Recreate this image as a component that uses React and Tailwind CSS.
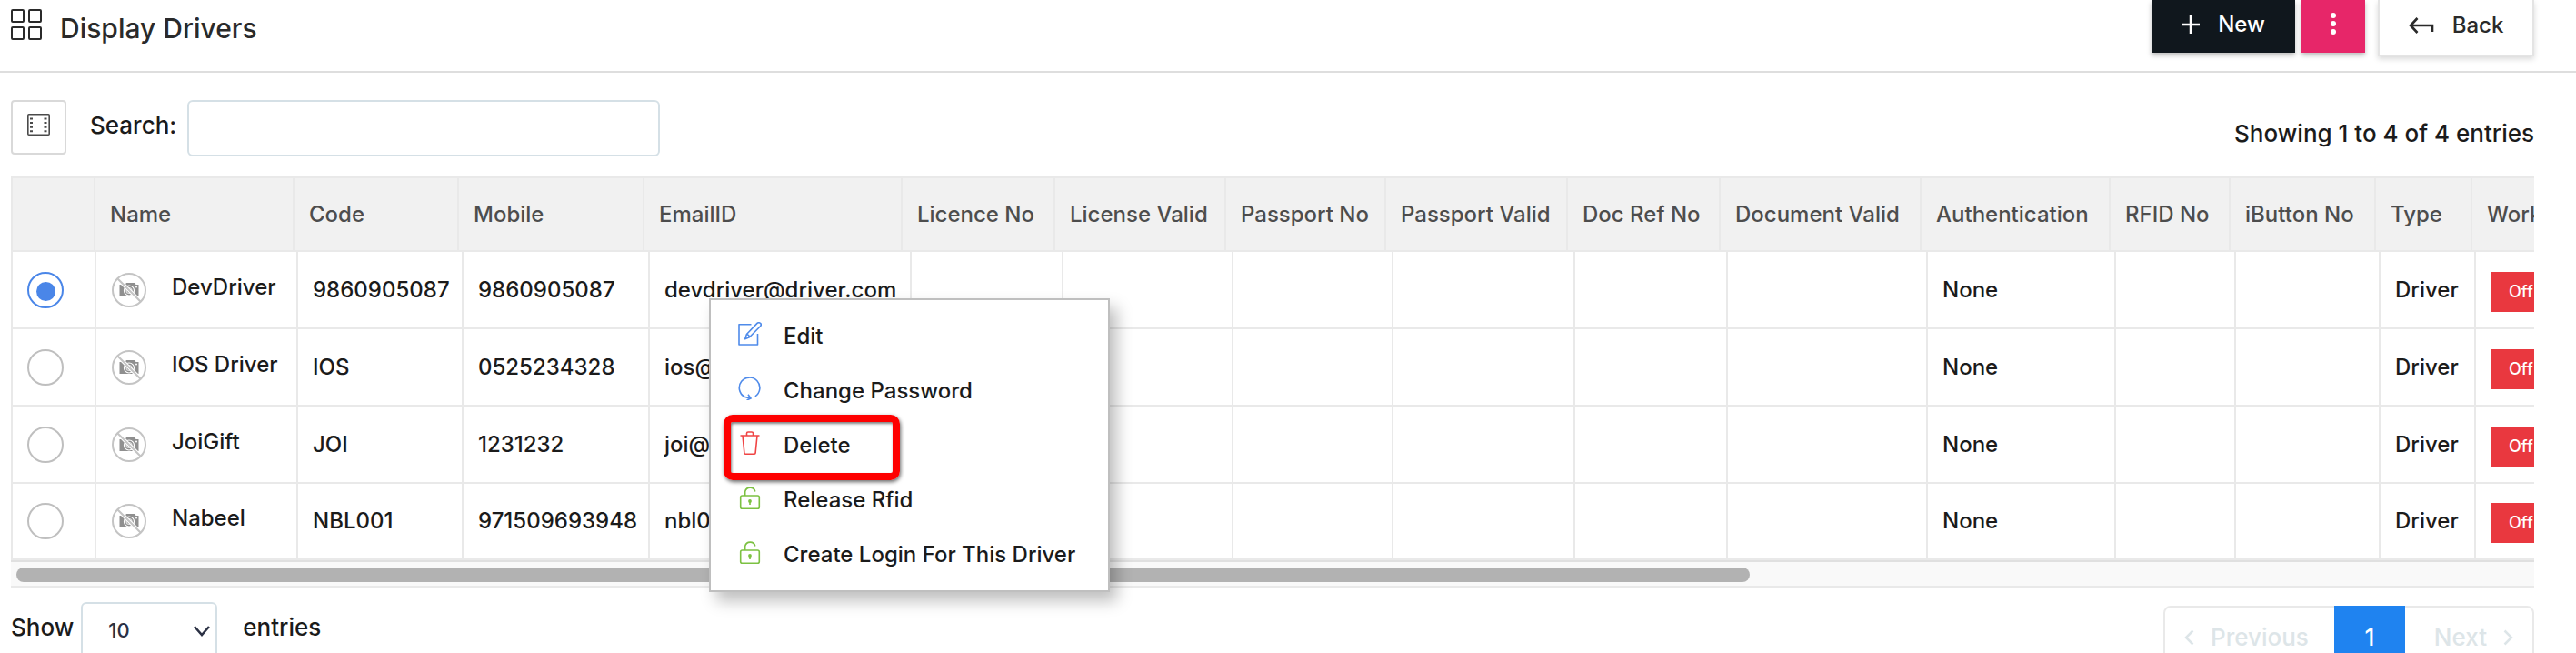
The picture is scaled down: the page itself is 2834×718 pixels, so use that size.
import { useState } from "react";

const columns = [
  { label: "", head: "w-[93px]", body: "w-[94px]" },
  { label: "Name", head: "w-[219px]", body: "w-[222px]" },
  { label: "Code", head: "w-[181px]", body: "w-[182px]" },
  { label: "Mobile", head: "w-[204px]", body: "w-[205px]" },
  { label: "EmailID", head: "w-[284px]", body: "w-[288px]" },
  { label: "Licence No", head: "w-[168px]", body: "w-[167px]" },
  { label: "License Valid", head: "w-[188px]", body: "w-[187px]" },
  { label: "Passport No", head: "w-[176px]", body: "w-[176px]" },
  { label: "Passport Valid", head: "w-[200px]", body: "w-[200px]" },
  { label: "Doc Ref No", head: "w-[168px]", body: "w-[168px]" },
  { label: "Document Valid", head: "w-[221px]", body: "w-[220px]" },
  { label: "Authentication", head: "w-[208px]", body: "w-[207px]" },
  { label: "RFID No", head: "w-[132px]", body: "w-[132px]" },
  { label: "iButton No", head: "w-[160px]", body: "w-[159px]" },
  { label: "Type", head: "w-[106px]", body: "w-[105px]" },
  { label: "Work Status", head: "w-[220px]", body: "w-[220px]" },
];

const drivers = [
  { name: "DevDriver", code: "9860905087", mobile: "9860905087", email: "devdriver@driver.com" },
  { name: "IOS Driver", code: "IOS", mobile: "0525234328", email: "ios@driver.com" },
  { name: "JoiGift", code: "JOI", mobile: "1231232", email: "joi@driver.com" },
  { name: "Nabeel", code: "NBL001", mobile: "971509693948", email: "nbl001@driver.com" },
];

const GridIcon = () => (
  <svg width="34" height="34" viewBox="0 0 34 34" fill="none" stroke="#2a2a2a" strokeWidth="2">
    <rect x="1" y="1" width="13" height="13" rx="1" />
    <rect x="20" y="1" width="13" height="13" rx="1" />
    <rect x="1" y="20" width="13" height="13" rx="1" />
    <rect x="20" y="20" width="13" height="13" rx="1" />
  </svg>
);

const ColumnsIcon = () => (
  <svg width="25" height="24" viewBox="0 0 25 24" fill="none" stroke="#4a4a4a">
    <rect x="0.8" y="0.8" width="23.4" height="22.4" rx="1" strokeWidth="1.6" />
    <path d="M4.5 3.5v18M20 3.5v18" strokeWidth="3" strokeDasharray="2 2.6" strokeDashoffset="-1" />
  </svg>
);

const BackIcon = () => (
  <svg width="28" height="20" viewBox="0 0 28 20" fill="none" stroke="#2a2a2a" strokeWidth="2.6">
    <path d="M9.5 2L2 10l7.5 8M2 10h24v7" />
  </svg>
);

const NoPhotoIcon = () => (
  <svg width="38" height="38" viewBox="0 0 38 38" fill="none">
    <path d="M8.5 13h6l1.5-2h9l1.5 2h3v13h-21z" fill="#8f8f8f" />
    <circle cx="19" cy="19.5" r="5.5" fill="#8f8f8f" stroke="#fff" strokeWidth="1.2" />
    <circle cx="19" cy="19.5" r="3" stroke="#dcdcdc" strokeWidth="1.2" />
    <circle cx="27" cy="15.5" r="1" fill="#fff" />
    <path d="M6.5 6.5l25 25" stroke="#fff" strokeWidth="4" />
    <path d="M6.5 6.5l25 25" stroke="#c4c4c4" strokeWidth="2.2" />
    <circle cx="19" cy="19" r="18" stroke="#c4c4c4" strokeWidth="2" />
  </svg>
);

const EditIcon = () => (
  <svg width="26" height="26" viewBox="0 0 26 26" fill="none" stroke="#4f8bea" strokeWidth="1.6" strokeLinejoin="round">
    <path d="M14.5 2.8H1v22.2h20.5V13" />
    <path d="M21 1.4c1.3-1.1 3-.7 3.7.2.8 1 .6 2.3-.3 3.2L12.5 16.7l-4.9 2 1.8-5.2z" />
    <path d="M9.4 13.5c1.7.2 2.8 1.4 3.1 3.2" />
  </svg>
);

const ResetIcon = () => (
  <svg width="26" height="26" viewBox="0 0 26 26" fill="none" stroke="#4f8bea" strokeWidth="1.6">
    <path d="M18.8 21.800A11.3 11.3 0 1 0 7 22.200l6.600 2" />
    <path d="M11 19.8l3 4.2-4.400 2" />
  </svg>
);

const TrashIcon = () => (
  <svg width="26" height="26" viewBox="0 0 26 26" fill="none" stroke="#f04444" strokeWidth="1.6">
    <path d="M2.5 5h21M9.5 5V2.5Q9.5 1 11 1h4q1.5 0 1.5 1.5V5" />
    <path d="M5 5l1.9 19.2q.1 1 1.1 1h10q1 0 1.1-1L21 5" />
  </svg>
);

const UnlockIcon = () => (
  <svg width="26" height="26" viewBox="0 0 26 26" fill="none" stroke="#7cc142" strokeWidth="1.6">
    <rect x="2.7" y="11" width="20.6" height="14.2" rx="1.8" />
    <path d="M7.7 11V6.5A5.7 5.7 0 0 1 18.8 6.5" />
    <circle cx="13" cy="17" r="1.1" fill="#7cc142" />
    <path d="M13 17v4" />
  </svg>
);

const Chevron = ({ d, width = 12, height = 18 }) => (
  <svg width={width} height={height} viewBox={`0 0 ${width} ${height}`} fill="none" stroke="currentColor" strokeWidth="2.5">
    <path d={d} />
  </svg>
);

const menuItems = [
  { label: "Edit", icon: <EditIcon /> },
  { label: "Change Password", icon: <ResetIcon /> },
  { label: "Delete", icon: <TrashIcon />, marked: true },
  { label: "Release Rfid", icon: <UnlockIcon /> },
  { label: "Create Login For This Driver", icon: <UnlockIcon /> },
];

const Header = () => (
  <header className="flex h-20 items-start justify-between border-b-2 border-[#dedede] pl-3 pr-[46px]">
    <div className="flex items-start pt-2.5 text-[#2a2a2a]">
      <GridIcon />
      <h1 className="ml-5 text-[30px] font-medium leading-[42px]">Display Drivers</h1>
    </div>
    <div className="flex items-start text-2xl font-medium">
      <button
        type="button"
        className="flex h-[58px] w-[158px] items-center justify-center gap-5 bg-[#10171d] pb-1 text-white shadow-[0_3px_5px_rgba(0,0,0,0.25)]"
      >
        <svg width="20" height="20" viewBox="0 0 20 20" stroke="currentColor" strokeWidth="2.5">
          <path d="M10 0v20M0 10h20" />
        </svg>
        New
      </button>
      <button
        type="button"
        aria-label="More actions"
        className="ml-[7px] flex h-[58px] w-[70px] items-center justify-center bg-[#e72669] pb-1.5 text-white shadow-[0_3px_5px_rgba(0,0,0,0.25)]"
      >
        <svg width="6" height="24" viewBox="0 0 6 24" fill="currentColor">
          <circle cx="3" cy="3" r="3" />
          <circle cx="3" cy="12" r="3" />
          <circle cx="3" cy="21" r="3" />
        </svg>
      </button>
      <button
        type="button"
        className="ml-3.5 flex h-[62px] w-[172px] items-center justify-center gap-5 border-2 border-t-0 border-[#e4e4e4] bg-white pb-1 text-[#2a2a2a] shadow-[0_3px_6px_rgba(0,0,0,0.15)]"
      >
        <BackIcon />
        Back
      </button>
    </div>
  </header>
);

const Toolbar = () => {
  const [search, setSearch] = useState("");

  return (
    <div className="flex items-start justify-between">
      <div className="flex items-start">
        <button
          type="button"
          aria-label="Choose columns"
          className="flex h-[60px] w-[61px] items-center justify-center rounded border-2 border-[#d9d9d9] pb-1.5"
        >
          <ColumnsIcon />
        </button>
        <label htmlFor="search" className="ml-[26px] text-[26px] leading-[56px]">
          Search:
        </label>
        <input
          id="search"
          type="text"
          value={search}
          onChange={(e) => setSearch(e.target.value)}
          className="ml-3 h-[62px] w-[520px] rounded-md border-2 border-[#d5e0e6] px-4 text-2xl outline-none"
        />
      </div>
      <p className="pt-3 text-[26px] leading-[50px]">Showing 1 to 4 of 4 entries</p>
    </div>
  );
};

const DriverRow = ({ driver, checked, onSelect }) => (
  <tr className="h-[85px] last:h-[84px] [&>td]:border-b-2 [&>td]:border-r-2 [&>td]:border-[#e9e9e9] [&>td]:px-4 [&>td:first-child]:border-l-2">
    <td>
      <input
        type="radio"
        name="driver"
        aria-label={driver.name}
        checked={checked}
        onChange={onSelect}
        className="flex size-10 appearance-none items-center justify-center rounded-full border-2 border-[#bfbfbf] pt-1 before:size-[21px] before:rounded-full checked:border-[#4a86e8] checked:before:bg-[#4a86e8]"
      />
    </td>
    <td>
      <div className="flex items-center gap-[27px] whitespace-nowrap">
        <span className="flex size-10 items-center justify-center">
          <NoPhotoIcon />
        </span>
        <span className="pb-1.5">{driver.name}</span>
      </div>
    </td>
    <td>{driver.code}</td>
    <td>{driver.mobile}</td>
    <td>{driver.email}</td>
    <td />
    <td />
    <td />
    <td />
    <td />
    <td />
    <td>None</td>
    <td />
    <td />
    <td>Driver</td>
    <td>
      <span className="mt-1 inline-block whitespace-nowrap bg-[#e9383f] px-5 align-middle text-lg leading-[44px] text-white">
        Off Duty
      </span>
    </td>
  </tr>
);

const ContextMenu = () => (
  <ul
    role="menu"
    className="absolute left-[768px] top-[134px] w-[441px] border-2 border-[#bfbfbf] bg-white pb-[9px] pt-2.5 shadow-[8px_10px_16px_rgba(0,0,0,0.25)]"
  >
    {menuItems.map((item) => (
      <li key={item.label} role="none" className="relative">
        <button type="button" role="menuitem" className="flex h-[60px] w-full items-center gap-6 pl-[30px] text-left">
          <span className="pb-1.5">{item.icon}</span>
          {item.label}
        </button>
        {item.marked && (
          <span className="pointer-events-none absolute -top-1 left-3.5 h-[72px] w-[194px] rounded-[10px] border-8 border-[#fe0000] shadow-[1px_2px_4px_rgba(0,0,0,0.6),inset_1px_2px_3px_rgba(0,0,0,0.5)]" />
        )}
      </li>
    ))}
  </ul>
);

const DriversTable = () => {
  const [selected, setSelected] = useState(0);

  return (
    <div className="relative mt-[22px]">
      <div className="overflow-hidden border-t-2 border-[#e9e9e9]">
        <table className="w-0 table-fixed border-separate border-spacing-0">
          <thead>
            <tr className="h-[81px] bg-[#f1f1f1] text-left text-[#4d4d4d]">
              {columns.map((col, i) => (
                <th
                  key={i}
                  scope="col"
                  className={`${col.head} whitespace-nowrap border-b-2 border-r-2 border-[#e9e9e9] px-4 font-medium first:border-l-2`}
                >
                  {col.label}
                </th>
              ))}
            </tr>
          </thead>
        </table>
        <table aria-label="Drivers" className="w-0 table-fixed border-separate border-spacing-0">
          <colgroup>
            {columns.map((col, i) => (
              <col key={i} className={col.body} />
            ))}
          </colgroup>
          <tbody>
            {drivers.map((driver, i) => (
              <DriverRow
                key={driver.name}
                driver={driver}
                checked={selected === i}
                onSelect={() => setSelected(i)}
              />
            ))}
          </tbody>
        </table>
      </div>
      <div className="border-b-2 border-t-2 border-b-[#e9e9e9] border-t-[#e0e0e0] bg-[#f9f9f9] px-1.5 pb-1 pt-1.5">
        <div className="h-4 w-[69%] rounded-full bg-[#b2b2b2]" />
      </div>
      <ContextMenu />
    </div>
  );
};

const Footer = () => (
  <div className="flex items-start justify-between pt-4">
    <div className="flex items-start text-[26px] leading-[56px]">
      <label htmlFor="length">Show</label>
      <div className="relative ml-2 mr-7 text-[#2b3144]">
        <select
          id="length"
          defaultValue="10"
          className="h-[62px] w-[150px] appearance-none rounded-md border-2 border-[#d5e0e6] bg-white pl-7 text-[22px]"
        >
          <option>10</option>
          <option>25</option>
          <option>50</option>
        </select>
        <span className="pointer-events-none absolute right-2 top-[26px]">
          <Chevron d="M1 1l8 9 8-9" width={18} height={12} />
        </span>
      </div>
      <span>entries</span>
    </div>
    <nav
      aria-label="Pagination"
      className="mt-1 flex h-[70px] items-stretch rounded-lg border-2 border-[#e9e9e9] text-[26px] text-[#dde5e8]"
    >
      <button type="button" className="flex items-center gap-[18px] pl-5 pr-7">
        <Chevron d="M10.5 1.5L3 9l7.5 7.5" />
        Previous
      </button>
      <button type="button" className="-my-0.5 w-[78px] bg-[#1f83f0] text-white">
        1
      </button>
      <button type="button" className="flex items-center gap-[18px] pl-8 pr-5">
        Next
        <Chevron d="M1.5 1.5L9 9l-7.5 7.5" />
      </button>
    </nav>
  </div>
);

export default function App() {
  return (
    <div className="h-screen overflow-hidden bg-white font-['Inter','Liberation_Sans',sans-serif] text-2xl font-medium text-[#1b1b1b]">
      <Header />
      <main className="pl-3 pr-[46px] pt-[30px]">
        <Toolbar />
        <DriversTable />
        <Footer />
      </main>
    </div>
  );
}
